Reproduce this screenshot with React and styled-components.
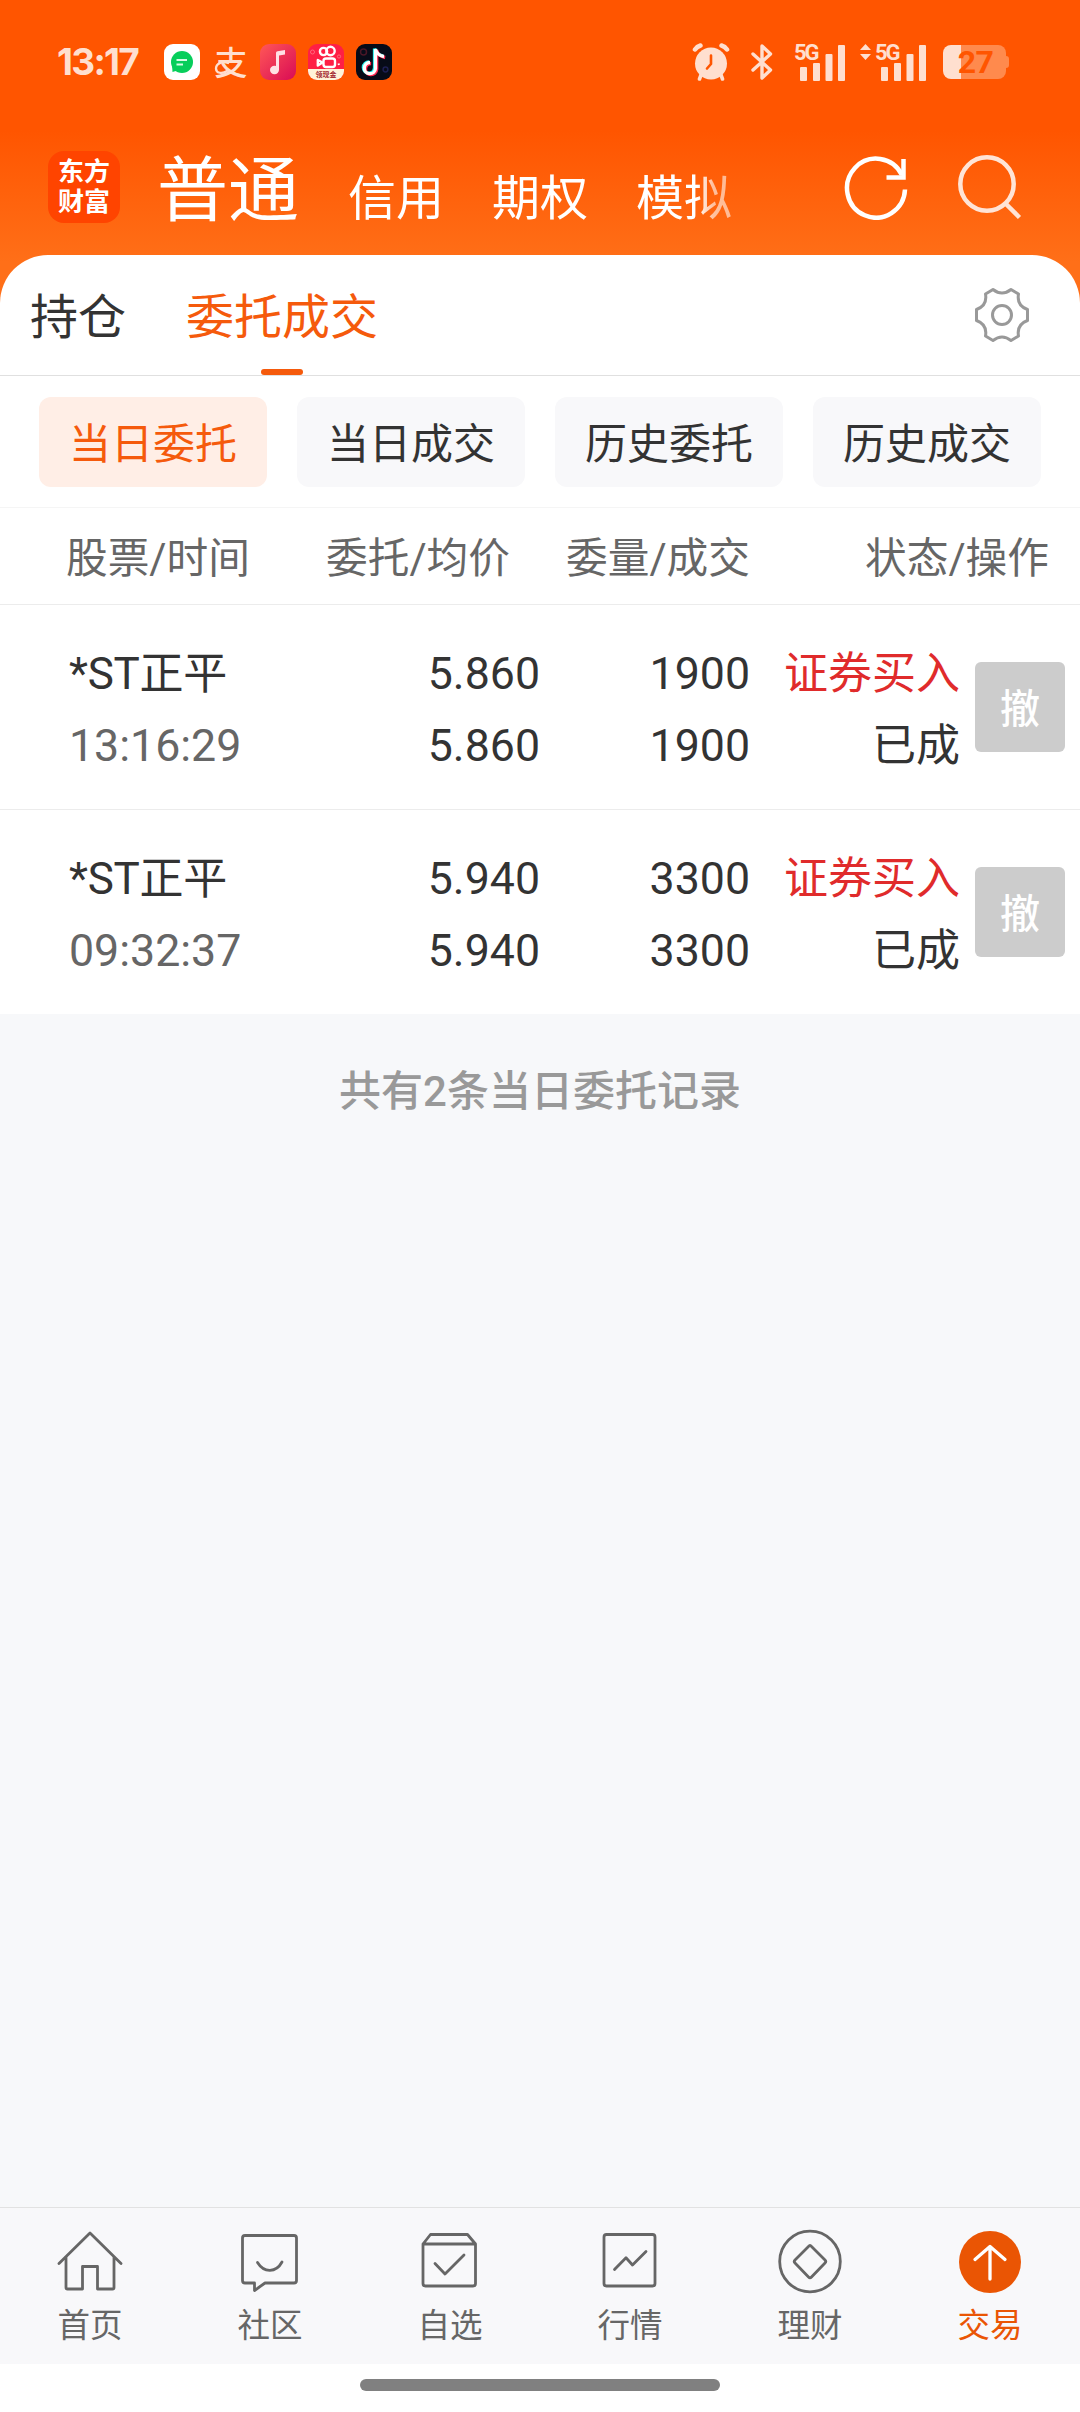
import React from 'react';
import styled, { createGlobalStyle } from 'styled-components';

const Global = createGlobalStyle`
  * { box-sizing: border-box; }
  body { margin: 0; background: #fff; }
  svg { display: block; flex: none; }
`;

const cjk = `'Noto Sans CJK SC', sans-serif`;
const latin = `Roboto, 'Noto Sans CJK SC', sans-serif`;

const Page = styled.div`
  width: 1080px;
  height: 2412px;
  display: flex;
  flex-direction: column;
  overflow: hidden;
  font-family: ${cjk};
  color: #333;
  background: linear-gradient(#ff5500 0, #ff5500 130px, #ff6f18 262px, #ff6f18 320px, #f7f8fa 320px);
`;

/* ---------- status bar ---------- */
const StatusBar = styled.div`
  height: 124px;
  display: flex;
  align-items: center;
  padding-left: 57px;
  color: #ffdfcf;
  flex: none;
`;
const Clock = styled.div`
  width: 107px;
  font: 700 37px/40px Inter, sans-serif;
  letter-spacing: -1.7px;
`;
const AppIcons = styled.div`
  display: flex;
  gap: 12px;
  flex: 1;
`;
const AppTile = styled.div`
  width: 36px;
  height: 36px;
  border-radius: 9px;
  overflow: hidden;
  background: ${(p) => p.$bg};
  display: flex;
  flex-direction: column;
  align-items: center;
  justify-content: center;
`;
const PayMark = styled.div`
  position: relative;
  width: 36px;
  height: 36px;
  font: 500 33px/34px ${cjk};
  text-align: center;
  padding-left: 2px;
  svg {
    position: absolute;
    left: 1px;
    top: 0;
  }
`;
const CashTag = styled.div`
  width: 36px;
  height: 11px;
  background: #fff3d8;
  color: #a3262e;
  font: 700 7px/10px ${cjk};
  text-align: center;
`;
const SignalGroup = styled.div`
  display: flex;
  align-items: flex-start;
  margin-left: ${(p) => p.$ml}px;
`;
const Signal = styled.div`
  position: relative;
  height: 37px;
  width: 52px;
`;
const NetLabel = styled.span`
  position: absolute;
  left: 0;
  top: -2px;
  font: 700 22px/22px Roboto, sans-serif;
  letter-spacing: -2.2px;
`;
const Battery = styled.div`
  position: relative;
  width: 63px;
  height: 34px;
  margin: 0 74px 0 16px;
  border-radius: 8px;
  background: linear-gradient(90deg, #ffdfcf 18px, #ff8a4d 18px);
  color: #ff5500;
  font: 700 32px/34px Roboto, sans-serif;
  letter-spacing: -0.5px;
  text-align: center;
  padding-left: 2px;
  &::after {
    content: '';
    position: absolute;
    right: -3px;
    top: 11px;
    width: 3px;
    height: 12px;
    border-radius: 0 3px 3px 0;
    background: #ff8a4d;
  }
`;

/* ---------- title bar ---------- */
const TitleBar = styled.header`
  height: 131px;
  flex: none;
  display: flex;
  align-items: flex-start;
  padding: 27px 58px 0 48px;
  color: #fff;
`;
const Logo = styled.div`
  width: 72px;
  height: 72px;
  border-radius: 16px;
  background: #ff4400;
  font: 700 26px/30px ${cjk};
  text-align: center;
  padding-top: 4px;
  flex: none;
`;
const Accounts = styled.nav`
  display: flex;
  align-items: baseline;
  gap: 48px;
  width: 612px;
  margin: -12px 0 0 37px;
  white-space: nowrap;
  mask-image: linear-gradient(90deg, #000 540px, rgba(0, 0, 0, 0.6) 556px, rgba(0, 0, 0, 0.55) 576px, transparent 606px);
`;
const Account = styled.span`
  font-size: ${(p) => (p.$active ? 71 : 48)}px;
  line-height: ${(p) => (p.$active ? 90 : 72)}px;
  margin-right: ${(p) => (p.$active ? 1 : 0)}px;
`;
const TitleIcons = styled.div`
  display: flex;
  margin: 0 0 0 auto;
  gap: 48px;
  padding-top: 1px;
`;

/* ---------- sheet ---------- */
const Sheet = styled.section`
  background: #fff;
  border-radius: 48px 48px 0 0;
  flex: none;
`;
const Tabs = styled.div`
  height: 121px;
  display: flex;
  align-items: stretch;
  padding: 0 50px 0 30px;
  gap: 60px;
  border-bottom: 1px solid #e0e0e0;
`;
const Tab = styled.div`
  display: flex;
  flex-direction: column;
  align-items: center;
  justify-content: space-between;
  font-size: 48px;
  line-height: 72px;
  padding-top: 22px;
  color: ${(p) => (p.$active ? '#f55a0c' : '#333')};
  &::after {
    content: '';
    width: 42px;
    height: 6px;
    border-radius: 3px;
    background: ${(p) => (p.$active ? '#f55a0c' : 'transparent')};
  }
`;
const Settings = styled.div`
  margin: 32px 0 0 auto;
`;
const Filters = styled.div`
  height: 132px;
  display: grid;
  grid-template-columns: repeat(4, 228px);
  gap: 30px;
  padding: 21px 39px;
  border-bottom: 1px solid #f5f5f5;
`;
const Filter = styled.div`
  height: 90px;
  border-radius: 12px;
  font-size: 42px;
  line-height: 88px;
  text-align: center;
  background: ${(p) => (p.$active ? '#ffeee6' : '#f8f8fa')};
  color: ${(p) => (p.$active ? '#f55a0c' : '#333')};
`;
const HeadRow = styled.div`
  height: 97px;
  display: grid;
  grid-template-columns: 190px 254px 240px 299px;
  padding: 2px 0 0 66px;
  font: 41.7px/98px ${latin};
  color: #666;
  white-space: nowrap;
  border-bottom: 1px solid #ececec;
`;
const HeadCell = styled.div`
  text-align: ${(p) => p.$align || 'right'};
  height: 94px;
`;
const Order = styled.div`
  height: ${(p) => (p.$first ? 204 : 205)}px;
  display: grid;
  grid-template-columns: 271px 200px 210px 210px 90px;
  padding-left: 69px;
  align-items: center;
  font: 44.5px/72px ${latin};
  border-top: ${(p) => (p.$first ? 'none' : '1px solid #ececec')};
`;
const Cell = styled.div`
  text-align: ${(p) => p.$align || 'right'};
  white-space: nowrap;
  padding-top: 5px;
`;
const Line = styled.div`
  color: ${(p) => p.$color || '#333'};
  font-size: ${(p) => p.$size || 44.7}px;
  letter-spacing: ${(p) => p.$track || 0}px;
  height: 72px;
`;
const CancelButton = styled.div`
  width: 90px;
  height: 90px;
  margin-left: 15px;
  border-radius: 6px;
  background: #ccc;
  color: #fff;
  font: 500 40px/88px ${cjk};
  text-align: center;
`;
const Body = styled.main`
  flex: 1;
  background: #f7f8fa;
  padding-top: 46px;
  text-align: center;
  font: 500 42px/64px ${latin};
  color: #999;
`;

/* ---------- bottom nav ---------- */
const BottomNav = styled.nav`
  height: 157px;
  flex: none;
  display: grid;
  grid-template-columns: repeat(6, 1fr);
  background: #f8f8fa;
  border-top: 1px solid #e2e2e2;
`;
const NavItem = styled.div`
  display: flex;
  flex-direction: column;
  align-items: center;
  padding-top: 18px;
  font-size: 32.5px;
  line-height: 48px;
  color: ${(p) => (p.$active ? '#ea5504' : '#666')};
  svg { margin-bottom: 1px; }
`;
const HomeIndicator = styled.div`
  height: 48px;
  flex: none;
  background: #fff;
  display: flex;
  justify-content: center;
  padding-top: 15px;
  &::after {
    content: '';
    width: 360px;
    height: 12px;
    border-radius: 6px;
    background: #808080;
  }
`;

const Bars = () => (
  <svg width="52" height="37" viewBox="0 0 52 37" fill="currentColor">
    <rect x="6" y="23" width="7" height="14" rx="1" />
    <rect x="19" y="19" width="7" height="18" rx="1" />
    <rect x="31.5" y="10" width="7" height="27" rx="1" />
    <rect x="44" y="1" width="7" height="36" rx="1" />
  </svg>
);

const AlarmIcon = () => (
  <svg width="38" height="38" viewBox="0 0 38 38">
    <g stroke="currentColor" strokeLinecap="round" fill="none">
      <path d="M3 6.500Q5 3.500 8.500 2.500" strokeWidth="4.500" />
      <path d="M35 6.500Q33 3.500 29.500 2.500" strokeWidth="4.500" />
      <path d="M9 32L7.500 36M29 32L30.500 36" strokeWidth="3.600" />
    </g>
    <circle cx="19" cy="20.500" r="16" fill="currentColor" />
    <path d="M19 12.500V21L15 25.500" stroke="#ff5500" strokeWidth="2.600" fill="none" strokeLinecap="round" strokeLinejoin="round" />
  </svg>
);

const BluetoothIcon = () => (
  <svg width="22" height="38" viewBox="0 0 22 38" fill="none" stroke="currentColor" strokeWidth="3.400" strokeLinejoin="round" strokeLinecap="round">
    <path d="M2 11L19.500 27L11 35V3L19.500 11L2 27" />
  </svg>
);

const DataArrows = () => (
  <svg width="11" height="16" viewBox="0 0 11 16" fill="currentColor">
    <path d="M5.500 0L11 6H0Z M5.500 16L0 10H11Z" />
  </svg>
);

const MessageIcon = () => (
  <svg width="36" height="36" viewBox="0 0 36 36">
    <circle cx="18" cy="18" r="11" fill="#07ce5b" />
    <path d="M8 21L8.500 28L15 26Z" fill="#07ce5b" />
    <path d="M12.500 16H23M12.500 20.500H19" stroke="#d8fbe6" strokeWidth="1.800" />
  </svg>
);

const PayLoop = () => (
  <svg width="36" height="36" viewBox="0 0 36 36" fill="none" stroke="currentColor" strokeWidth="2.300" strokeLinecap="round">
    <path d="M15 19C9 16.500 3 20 3 24.500C3 29 9 30.500 14 27" />
  </svg>
);

const NoteIcon = () => (
  <svg width="36" height="36" viewBox="0 0 36 36" fill="#ffe1e4">
    <ellipse cx="14.500" cy="26" rx="4.500" ry="4.200" />
    <path d="M16 26V9Q16 7.500 17.500 7.200L25 6V10.500L19 11.500V26Z" />
  </svg>
);

const CameraIcon = () => (
  <svg width="36" height="25" viewBox="0 0 36 25" fill="none" stroke="#fff" strokeWidth="2.400">
    <circle cx="15.500" cy="7.500" r="3.600" />
    <circle cx="22.500" cy="7" r="4.200" />
    <rect x="15.500" y="14.500" width="11.500" height="8.500" rx="2.500" />
    <path d="M14.500 18.500L9.800 16V21.500Z" strokeLinejoin="round" />
    <circle cx="4.500" cy="8" r="2" stroke="#ff6a7c" strokeWidth="1" />
    <circle cx="31" cy="12.500" r="1.600" stroke="#ff6a7c" strokeWidth="1" />
    <path d="M30.500 19.500L31 21" strokeWidth="2" />
  </svg>
);

const notePath = 'M19.500 5V24.500A5.600 5.600 0 1 1 14 18.500M19.500 5Q21 11.500 28 12.500';
const ShortVideoIcon = () => (
  <svg width="36" height="36" viewBox="0 0 36 36" fill="none" strokeWidth="3.300">
    <circle cx="7.500" cy="8" r="3" stroke="#4a1626" strokeWidth="1.500" />
    <circle cx="29.500" cy="25.500" r="2.400" stroke="#1d1f52" strokeWidth="1.500" />
    <path d={notePath} stroke="#25f4ee" transform="translate(-1 -.6)" />
    <path d={notePath} stroke="#fe2c55" transform="translate(1.200 1)" />
    <path d={notePath} stroke="#fff" />
  </svg>
);

const RefreshIcon = () => (
  <svg width="64" height="68" viewBox="0 0 64 68" fill="none" stroke="#fff" strokeWidth="4.500">
    <path d="M61 37.500A29 29.500 0 1 1 58 23" />
    <path d="M42.500 25.500H61M59.500 7V27.700" />
  </svg>
);

const SearchIcon = () => (
  <svg width="66" height="68" viewBox="0 0 66 68" fill="none" stroke="#ffe4d6" strokeWidth="4.500">
    <circle cx="31" cy="32" r="26.700" />
    <path d="M49.500 51.500L63.500 65.500" />
  </svg>
);

const GearIcon = () => (
  <svg width="56" height="56" viewBox="0 0 56 56" fill="none" stroke="#999" strokeWidth="3" strokeLinejoin="round">
    <circle cx="28" cy="28" r="9.500" />
    <path d="M19 2.500Q28 9.500 37 2.500L44.500 7Q42.500 18.500 53.500 22.500V33.500Q42.500 37.500 44.500 49L37 53.500Q28 46.500 19 53.500L11.500 49Q13.500 37.500 2.500 33.500V22.500Q13.500 18.500 11.500 7Z" />
  </svg>
);

const NavSvg = ({ children }) => (
  <svg width="72" height="72" viewBox="0 0 72 72" fill="none" stroke="currentColor" strokeWidth="2.800" strokeLinejoin="round" strokeLinecap="round">
    {children}
  </svg>
);

const navItems = [
  { label: '首页', icon: <path d="M5 37.500L36 7L67 37.500M12 31V61.500Q12 63 13.500 63H28.500V40.500H43.500V63H58.500Q60 63 60 61.500V31" /> },
  { label: '社区', icon: <><path d="M11 9.500H60Q62.500 9.500 62.500 12V54.500Q62.500 57 60 57H31L20.500 64.500V57H11Q8.500 57 8.500 54.500V12Q8.500 9.500 11 9.500Z" /><path d="M23.500 36.500C30 47 42 47 48 36" /></> },
  { label: '自选', icon: <><path d="M9 18L16.500 8.500H53.500L61.500 18V57.500Q61.500 60 59 60H11.500Q9 60 9 57.500ZM9 18H61.500" /><path d="M21 37.500L31 48L50 29" /></> },
  { label: '行情', icon: <><rect x="10" y="8.500" width="51" height="51.500" rx="2.500" /><path d="M20.500 43.500L32 31.700L38.500 39L52 25.500" /></> },
  { label: '理财', icon: <><circle cx="36" cy="35.500" r="30.300" /><path d="M34.500 20.500Q36 18.500 37.500 20.500L51 34Q52.500 35.500 51 37L37.500 51Q36 52.500 34.500 51L21 37Q19.500 35.500 21 34Z" /></> },
  { label: '交易', active: true, icon: <><circle cx="36" cy="36" r="31" fill="#ea5504" stroke="none" /><path d="M36 53V21M21 33.500L36 20.500L51 33.500" stroke="#fff" strokeWidth="3.300" /></> },
];

const orders = [
  { time: '13:16:29', price: '5.860', qty: '1900' },
  { time: '09:32:37', price: '5.940', qty: '3300' },
];

export default function App() {
  return (
    <Page>
      <Global />
      <StatusBar>
        <Clock>13:17</Clock>
        <AppIcons>
          <AppTile $bg="#fff"><MessageIcon /></AppTile>
          <PayMark>支<PayLoop /></PayMark>
          <AppTile $bg="linear-gradient(135deg, #ff5757, #d90b55)"><NoteIcon /></AppTile>
          <AppTile $bg="#ff1f45"><CameraIcon /><CashTag>领现金</CashTag></AppTile>
          <AppTile $bg="#070b18"><ShortVideoIcon /></AppTile>
        </AppIcons>
        <AlarmIcon />
        <SignalGroup $ml={21}><BluetoothIcon /></SignalGroup>
        <SignalGroup $ml={21}>
          <Signal><NetLabel>5G</NetLabel><Bars /></Signal>
        </SignalGroup>
        <SignalGroup $ml={14}>
          <DataArrows />
          <SignalGroup $ml={4}>
            <Signal><NetLabel>5G</NetLabel><Bars /></Signal>
          </SignalGroup>
        </SignalGroup>
        <Battery>27</Battery>
      </StatusBar>

      <TitleBar>
        <Logo>东方<br />财富</Logo>
        <Accounts>
          <Account $active>普通</Account>
          <Account>信用</Account>
          <Account>期权</Account>
          <Account>模拟</Account>
        </Accounts>
        <TitleIcons>
          <RefreshIcon />
          <SearchIcon />
        </TitleIcons>
      </TitleBar>

      <Sheet>
        <Tabs>
          <Tab>持仓</Tab>
          <Tab $active>委托成交</Tab>
          <Settings><GearIcon /></Settings>
        </Tabs>
        <Filters>
          <Filter $active>当日委托</Filter>
          <Filter>当日成交</Filter>
          <Filter>历史委托</Filter>
          <Filter>历史成交</Filter>
        </Filters>
        <HeadRow>
          <HeadCell $align="left">股票/时间</HeadCell>
          <HeadCell>委托/均价</HeadCell>
          <HeadCell>委量/成交</HeadCell>
          <HeadCell>状态/操作</HeadCell>
        </HeadRow>
        {orders.map((o, i) => (
          <Order key={o.time} $first={i === 0}>
            <Cell $align="left">
              <Line $size={44} $track={-0.3}>*ST正平</Line>
              <Line $color="#666">{o.time}</Line>
            </Cell>
            <Cell><Line>{o.price}</Line><Line>{o.price}</Line></Cell>
            <Cell><Line>{o.qty}</Line><Line>{o.qty}</Line></Cell>
            <Cell>
              <Line $color="#e02b2b" $size={44}>证券买入</Line>
              <Line $size={44}>已成</Line>
            </Cell>
            <CancelButton>撤</CancelButton>
          </Order>
        ))}
      </Sheet>

      <Body>共有2条当日委托记录</Body>

      <BottomNav>
        {navItems.map((n) => (
          <NavItem key={n.label} $active={n.active}>
            <NavSvg>{n.icon}</NavSvg>
            {n.label}
          </NavItem>
        ))}
      </BottomNav>
      <HomeIndicator />
    </Page>
  );
}
